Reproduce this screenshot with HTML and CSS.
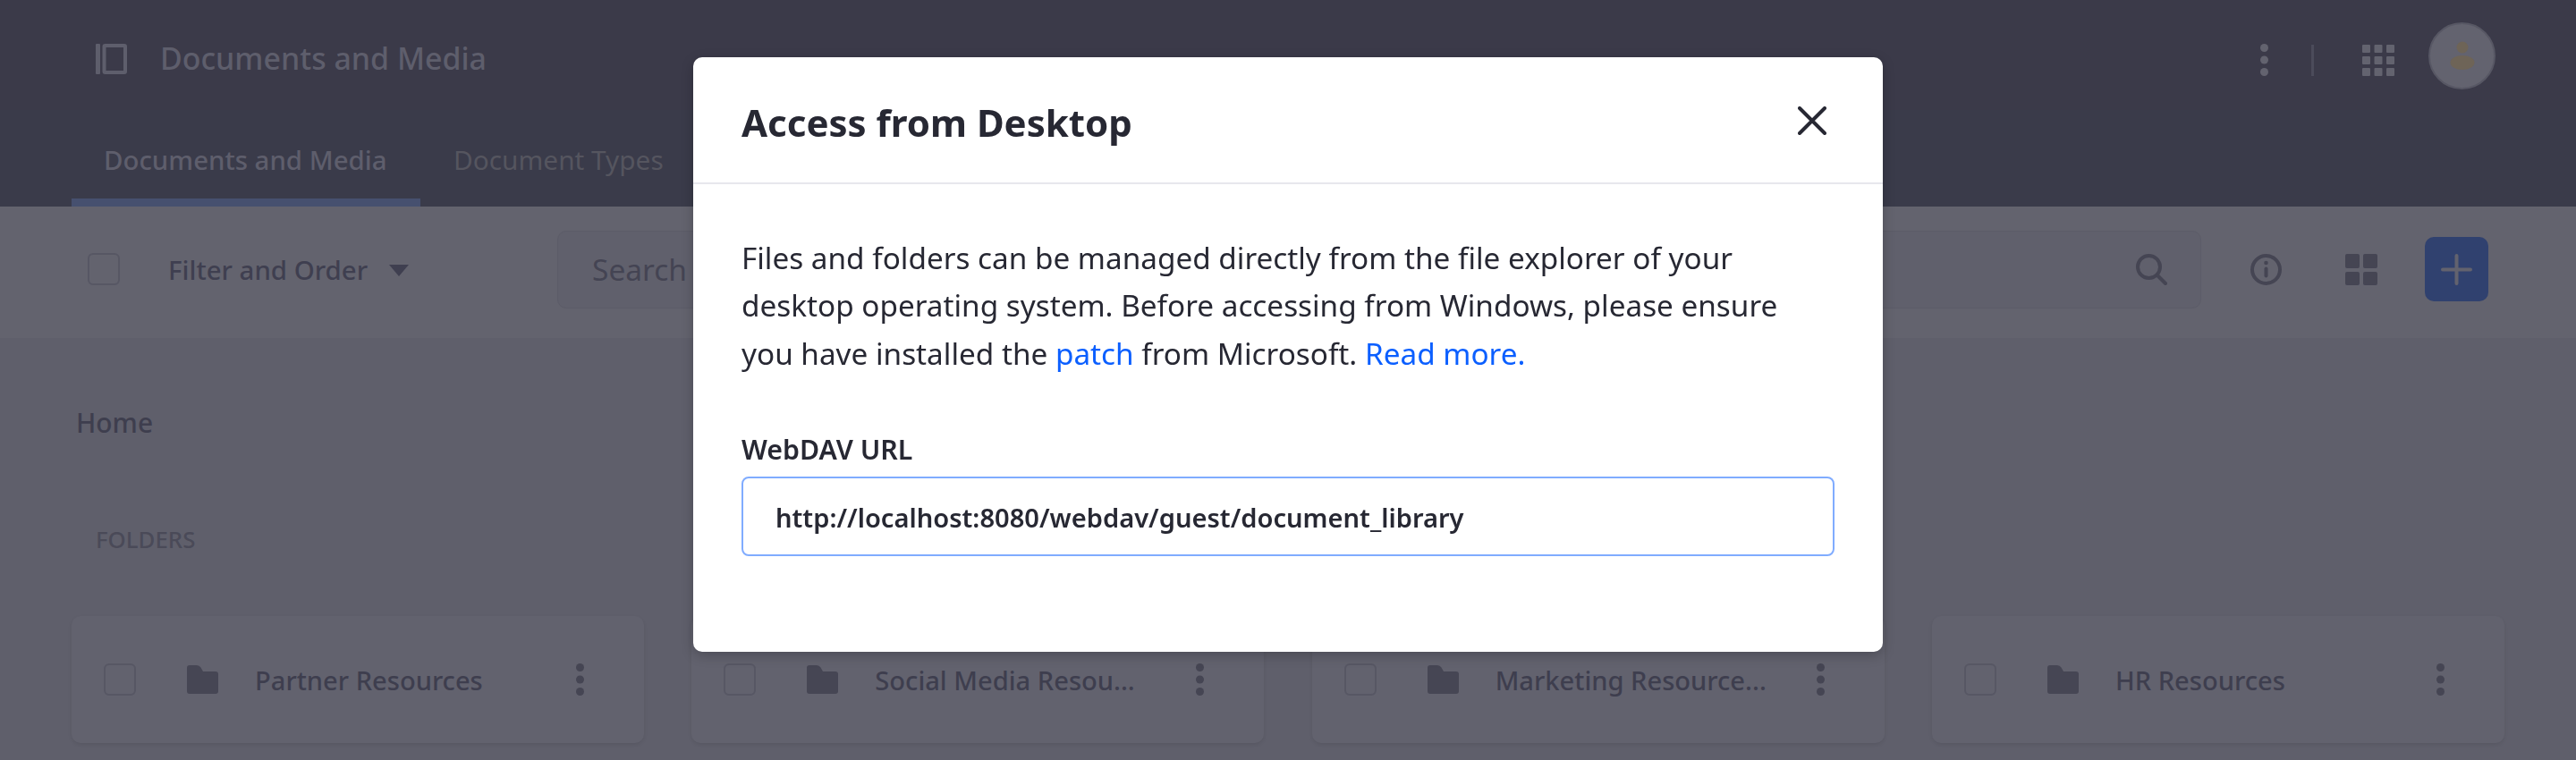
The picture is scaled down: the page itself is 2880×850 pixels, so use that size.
FILE: index.html
```html
<!DOCTYPE html>
<html lang="en">
<head>
    <meta charset="UTF-8">
    <title>Documents and Media</title>
    <link rel="stylesheet" href="styles.css">
</head>
<body>
    <header class="top-header">
        <div class="top-bar">
            <svg class="sidebar-icon" viewBox="0 0 35 34"><rect x="0" y="0" width="5" height="34" rx="1"/><rect x="9.5" y="2" width="23.5" height="30" rx="1" class="outline"/></svg>
            <h1 class="app-title">Documents and Media</h1>
            <div class="top-tools">
                <svg class="kebab kebab-light" viewBox="0 0 9 36"><circle cx="4.5" cy="4.5" r="4.5"/><circle cx="4.5" cy="18" r="4.5"/><circle cx="4.5" cy="31.5" r="4.5"/></svg>
                <span class="tool-sep"></span>
                <svg class="apps-icon" viewBox="0 0 36 35">
                    <rect width="9" height="9" rx="1"/><rect x="13.5" width="9" height="9" rx="1"/><rect x="27" width="9" height="9" rx="1"/>
                    <rect y="13" width="9" height="9" rx="1"/><rect x="13.5" y="13" width="9" height="9" rx="1"/><rect x="27" y="13" width="9" height="9" rx="1"/>
                    <rect y="26" width="9" height="9" rx="1"/><rect x="13.5" y="26" width="9" height="9" rx="1"/><rect x="27" y="26" width="9" height="9" rx="1"/>
                </svg>
                <div class="avatar">
                    <svg viewBox="0 0 28 32"><circle cx="14" cy="7" r="6.5"/><ellipse cx="14" cy="24" rx="13.5" ry="8"/></svg>
                </div>
            </div>
        </div>
        <nav class="tabs">
            <a class="tab active">Documents and Media</a>
            <a class="tab">Document Types</a>
        </nav>
    </header>

    <div class="toolbar">
        <span class="checkbox"></span>
        <div class="filter">Filter and Order <span class="caret"></span></div>
        <div class="search">
            <span class="search-text">Search</span>
            <svg class="icon" viewBox="0 0 35 35"><circle cx="14.5" cy="14.5" r="12.5" class="line"/><path d="M24 24l9 9" class="line"/></svg>
        </div>
        <svg class="icon info-icon" viewBox="0 0 35 35"><circle cx="17.5" cy="17.5" r="15.5" class="line"/><circle cx="17.5" cy="10" r="2.3"/><rect x="15.5" y="14.5" width="4" height="12" rx="2"/></svg>
        <svg class="icon cards-icon" viewBox="0 0 36 35"><rect width="16" height="16" rx="2"/><rect x="20" width="16" height="16" rx="2"/><rect y="20" width="16" height="15" rx="2"/><rect x="20" y="20" width="16" height="15" rx="2"/></svg>
        <button class="add-btn"><svg viewBox="0 0 35 35"><path d="M17.5 2v31M2 17.5h31"/></svg></button>
    </div>

    <main class="content">
        <div class="breadcrumb">Home</div>
        <div class="section-title">FOLDERS</div>
        <div class="cards">
            <div class="card">
                <span class="checkbox"></span>
                <svg class="folder" viewBox="0 0 35 32"><path d="M3 0h8q3 0 4.500 2.500L18 7h14q3 0 3 3v19q0 3-3 3H3q-3 0-3-3V3q0-3 3-3z"/></svg>
                <span class="card-name">Partner Resources</span>
                <svg class="kebab" viewBox="0 0 9 36"><circle cx="4.5" cy="4.5" r="4.5"/><circle cx="4.5" cy="18" r="4.5"/><circle cx="4.5" cy="31.5" r="4.5"/></svg>
            </div>
            <div class="card">
                <span class="checkbox"></span>
                <svg class="folder" viewBox="0 0 35 32"><path d="M3 0h8q3 0 4.500 2.500L18 7h14q3 0 3 3v19q0 3-3 3H3q-3 0-3-3V3q0-3 3-3z"/></svg>
                <span class="card-name">Social Media Resou...</span>
                <svg class="kebab" viewBox="0 0 9 36"><circle cx="4.5" cy="4.5" r="4.5"/><circle cx="4.5" cy="18" r="4.5"/><circle cx="4.5" cy="31.5" r="4.5"/></svg>
            </div>
            <div class="card">
                <span class="checkbox"></span>
                <svg class="folder" viewBox="0 0 35 32"><path d="M3 0h8q3 0 4.500 2.500L18 7h14q3 0 3 3v19q0 3-3 3H3q-3 0-3-3V3q0-3 3-3z"/></svg>
                <span class="card-name">Marketing Resource...</span>
                <svg class="kebab" viewBox="0 0 9 36"><circle cx="4.5" cy="4.5" r="4.5"/><circle cx="4.5" cy="18" r="4.5"/><circle cx="4.5" cy="31.5" r="4.5"/></svg>
            </div>
            <div class="card">
                <span class="checkbox"></span>
                <svg class="folder" viewBox="0 0 35 32"><path d="M3 0h8q3 0 4.500 2.500L18 7h14q3 0 3 3v19q0 3-3 3H3q-3 0-3-3V3q0-3 3-3z"/></svg>
                <span class="card-name">HR Resources</span>
                <svg class="kebab" viewBox="0 0 9 36"><circle cx="4.5" cy="4.5" r="4.5"/><circle cx="4.5" cy="18" r="4.5"/><circle cx="4.5" cy="31.5" r="4.5"/></svg>
            </div>
        </div>
    </main>

    <div class="modal-layer">
        <div class="modal">
            <div class="modal-header">
                <h2>Access from Desktop</h2>
                <svg class="close-icon" viewBox="0 0 32 32"><path d="M2 2l28 28M30 2L2 30"/></svg>
            </div>
            <div class="modal-body">
                <p>Files and folders can be managed directly from the file explorer of your desktop operating system. Before accessing from Windows, please ensure you have installed the <a href="#">patch</a> from Microsoft. <a href="#">Read more.</a></p>
                <label class="field-label" for="webdav-url">WebDAV URL</label>
                <input id="webdav-url" class="field-input" type="text" readonly value="http://localhost:8080/webdav/guest/document_library">
            </div>
        </div>
    </div>
</body>
</html>
```

FILE: styles.css
```css
* {
    box-sizing: border-box;
}
html, body {
    height: 100%;
}
body {
    margin: 0;
    overflow: hidden;
    font-family: "Noto Sans", "Open Sans", sans-serif;
    background-color: #5f5f6b;
    color: #3e3e4e;
}

/* header */
.top-header {
    height: 231px;
    background-color: #3a3b4a;
}
.top-bar {
    display: flex;
    align-items: center;
    height: 123px;
    padding: 0 90px 0 107px;
    background-color: #3b3a49;
}
.sidebar-icon {
    width: 35px;
    height: 34px;
    margin-top: 8px;
    fill: #5e5e6c;
}
.sidebar-icon .outline {
    fill: none;
    stroke: #5e5e6c;
    stroke-width: 4;
}
.app-title {
    margin: 6px 0 0 37px;
    font-size: 33.9px;
    font-weight: 500;
    color: #5e5e6c;
}
.top-tools {
    display: flex;
    align-items: center;
    margin-left: auto;
}
.kebab {
    flex: none;
    width: 9px;
    height: 36px;
    fill: #454553;
}
.kebab-light {
    fill: #63636f;
    margin-top: 11px;
}
.tool-sep {
    width: 3px;
    height: 35px;
    margin: 11px 0 0 48px;
    background-color: #4b4b5a;
}
.apps-icon {
    width: 36px;
    height: 35px;
    margin: 11px 38px 0 54px;
    fill: #63636f;
}
.avatar {
    display: flex;
    align-items: center;
    justify-content: center;
    width: 75px;
    height: 75px;
    margin-top: 1px;
    border-radius: 50%;
    background-color: #63636f;
    border: 2px solid #575764;
}
.avatar svg {
    width: 28px;
    height: 32px;
    fill: #6e6457;
}
.tabs {
    display: flex;
    align-items: flex-end;
    height: 108px;
    padding-left: 80px;
}
.tab {
    height: 104px;
    line-height: 104px;
    padding: 0 36px;
    margin-right: 1px;
    white-space: nowrap;
    font-size: 29.8px;
    color: #55555f;
}
.tab.active {
    width: 390px;
    font-size: 29.4px;
    font-weight: 500;
    color: #5e5e6c;
    box-shadow: inset 0 -9px 0 #46506f;
}

/* toolbar */
.toolbar {
    display: flex;
    align-items: center;
    height: 147px;
    padding: 0 98px 7px;
    background-color: #63636e;
}
.checkbox {
    flex: none;
    width: 36px;
    height: 36px;
    border: 2px solid #575764;
    border-radius: 6px;
}
.filter {
    flex: none;
    display: flex;
    align-items: center;
    width: 435px;
    margin: 2px 0 0 54px;
    font-size: 29.4px;
    font-weight: 500;
    color: #3f3f50;
}
.caret {
    margin-left: 24px;
    border-top: 13px solid #3f3f50;
    border-left: 11px solid transparent;
    border-right: 11px solid transparent;
}
.search {
    flex: 1;
    display: flex;
    align-items: center;
    justify-content: space-between;
    height: 87px;
    padding: 0 37px 0 38px;
    background-color: #60606c;
    border: 1px solid #5c5c68;
    border-radius: 10px;
}
.search-text {
    font-size: 33.5px;
    color: #444453;
}
.icon {
    flex: none;
    width: 35px;
    height: 35px;
    fill: #454553;
}
.icon .line {
    fill: none;
    stroke: #454553;
    stroke-width: 4;
    stroke-linecap: round;
}
.info-icon {
    margin-left: 55px;
}
.cards-icon {
    width: 36px;
    margin-left: 71px;
}
.add-btn {
    flex: none;
    display: flex;
    align-items: center;
    justify-content: center;
    width: 71px;
    height: 72px;
    margin-left: 53px;
    padding: 0;
    border: none;
    border-radius: 10px;
    background-color: #30416f;
}
.add-btn svg {
    width: 35px;
    height: 35px;
    fill: none;
    stroke: #62626e;
    stroke-width: 4;
    stroke-linecap: round;
}

/* main content */
.content {
    padding: 68px 80px 0;
}
.breadcrumb {
    padding-left: 5px;
    font-size: 29.9px;
    line-height: 54px;
    font-weight: 500;
}
.section-title {
    margin-top: 83px;
    padding-left: 27px;
    font-size: 25.8px;
    line-height: 40px;
    font-weight: 500;
    color: #4a4a58;
}
.cards {
    display: grid;
    grid-template-columns: repeat(4, 1fr);
    gap: 53.3px;
    margin-top: 66px;
}
.card {
    display: flex;
    align-items: center;
    height: 142px;
    padding: 0 67px 0 36px;
    background-color: #62626e;
    border-radius: 10px;
    box-shadow: 0 2px 4px rgba(0, 0, 0, 0.08);
}
.folder {
    flex: none;
    width: 35px;
    height: 32px;
    margin-left: 57px;
    fill: #464654;
}
.card-name {
    margin: 2px 0 0 41px;
    white-space: nowrap;
    font-size: 29.1px;
    font-weight: 500;
}
.card .kebab {
    margin-left: auto;
}

/* modal */
.modal-layer {
    position: fixed;
    top: 0;
    right: 0;
    bottom: 0;
    left: 0;
    display: flex;
    justify-content: center;
    align-items: flex-start;
    padding-top: 64px;
}
.modal {
    width: 1330px;
    height: 665px;
    background-color: #fff;
    border-radius: 10px;
    box-shadow: 0 4px 14px rgba(0, 0, 0, 0.22);
    color: #272833;
}
.modal-header {
    display: flex;
    align-items: center;
    justify-content: space-between;
    height: 142px;
    padding: 0 63px 0 54px;
    border-bottom: 2px solid #e7e7ed;
}
.modal-header h2 {
    margin: 4px 0 0;
    font-size: 42px;
    font-weight: 700;
}
.close-icon {
    width: 32px;
    height: 32px;
    margin-top: 2px;
    fill: none;
    stroke: #272833;
    stroke-width: 4;
    stroke-linecap: round;
}
.modal-body {
    padding: 56px 54px 0;
}
.modal-body p {
    max-width: 1180px;
    margin: 0;
    font-size: 33.3px;
    line-height: 53.33px;
}
.modal-body a {
    color: #0b5fff;
    text-decoration: none;
}
.field-label {
    display: block;
    margin-top: 54px;
    font-size: 30.3px;
    line-height: 53px;
    font-weight: 600;
}
.field-input {
    display: block;
    width: 100%;
    height: 89px;
    margin-top: 4px;
    padding: 4px 36px 0;
    border: 2px solid #80acff;
    border-radius: 8px;
    outline: none;
    font-family: inherit;
    font-size: 29.1px;
    font-weight: 600;
    color: #272833;
}
```
